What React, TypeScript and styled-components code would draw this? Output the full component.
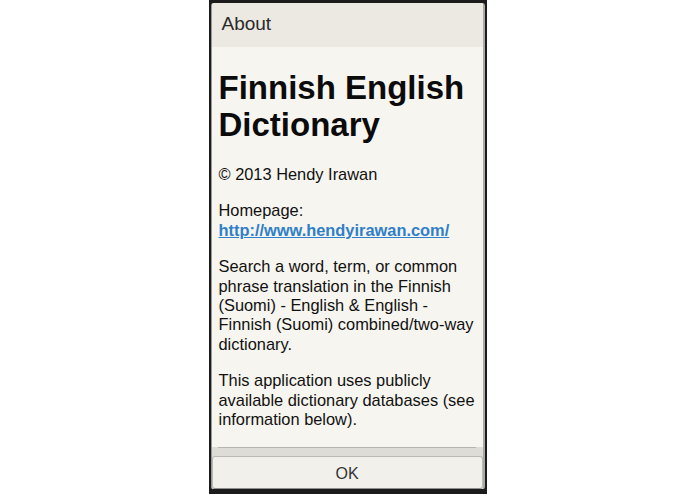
import React from 'react'
import styled, { createGlobalStyle } from 'styled-components'

const GlobalStyle = createGlobalStyle`
  html, body {
    margin: 0;
    padding: 0;
    background: #ffffff;
    font-family: "Liberation Sans", Arial, sans-serif;
  }
`

const Page = styled.div`
  width: 695px;
  height: 494px;
  display: flex;
  justify-content: center;
  overflow: hidden;
`

const Frame = styled.div`
  width: 278px;
  height: 494px;
  box-sizing: border-box;
  background: #1c1c1c;
  padding: 3px 2px 5px 2px;
  display: flex;
`

const Dialog = styled.div`
  flex: 1;
  display: flex;
  flex-direction: column;
  background: #f7f5ef;
  border-left: 1px solid #9a9a98;
  border-right: 2px solid #a9a9a7;
  border-radius: 3px 3px 2px 2px;
  overflow: hidden;
`

const TitleBar = styled.div`
  height: 44px;
  flex: none;
  background: #ebe9e2;
  padding-left: 10px;
  padding-bottom: 2px;
  box-sizing: border-box;
  display: flex;
  align-items: center;
  font-size: 19px;
  color: #2a2a2a;
`

const Content = styled.div`
  flex: 1;
  overflow: hidden;
  padding: 22px 7px 0 7px;
  color: #111111;
  font-size: 16.4px;
  line-height: 19.4px;
`

const Heading = styled.h1`
  margin: 0 0 22px 0;
  font-size: 33px;
  line-height: 37px;
  font-weight: bold;
  color: #0b0b0b;
`

const Paragraph = styled.p`
  margin: 0 0 17px 0;
`

const Link = styled.a`
  color: #2f80c9;
  font-weight: bold;
  text-decoration: underline;
`

const Footer = styled.div`
  flex: none;
  background: #dddcd7;
  border-top: 1px solid #b5b4b0;
  margin: 0 7px 0 6px;
  height: 8px;
`

const FooterBand = styled.div`
  flex: none;
  background: #dddcd7;
  display: flex;
  flex-direction: column;
`

const OkButton = styled.button`
  height: 33px;
  border: 1px solid #b9b9b6;
  border-bottom-color: #8f8f8d;
  border-radius: 3px;
  background: #f1f0eb;
  font-family: "Liberation Sans", Arial, sans-serif;
  font-size: 16px;
  color: #333333;
  padding: 3px 0 0 0;
`

export default function App() {
  return (
    <Page>
      <GlobalStyle />
      <Frame>
        <Dialog>
          <TitleBar>About</TitleBar>
          <Content>
            <Heading>Finnish English Dictionary</Heading>
            <Paragraph>© 2013 Hendy Irawan</Paragraph>
            <Paragraph>
              Homepage:
              <br />
              <Link href="#">http://www.hendyirawan.com/</Link>
            </Paragraph>
            <Paragraph>
              Search a word, term, or common phrase translation in the Finnish (Suomi) - English &amp; English -
              Finnish (Suomi) combined/two-way dictionary.
            </Paragraph>
            <Paragraph>
              This application uses publicly available dictionary databases (see information below).
            </Paragraph>
          </Content>
          <FooterBand>
            <Footer />
            <OkButton>OK</OkButton>
          </FooterBand>
        </Dialog>
      </Frame>
    </Page>
  )
}
